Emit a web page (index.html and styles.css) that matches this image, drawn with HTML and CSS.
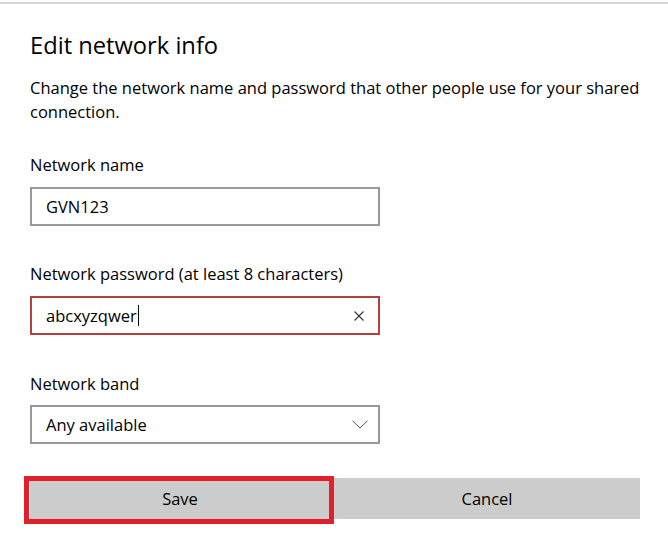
FILE: index.html
```html
<!DOCTYPE html>
<html lang="en">
<head>
<meta charset="utf-8">
<title>Edit network info</title>
<link rel="stylesheet" href="styles.css">
</head>
<body>
<div class="topline"></div>
<main class="dialog">
  <h1 class="title">Edit network info</h1>
  <p class="desc">Change the network name and password that other people use for your shared connection.</p>

  <div class="field field-first">
    <div class="label">Network name</div>
    <div class="box">
      <span class="value">GVN123</span>
    </div>
  </div>

  <div class="field field-second">
    <div class="label">Network password (at least 8 characters)</div>
    <div class="box box-focus">
      <span class="value">abcxyzqwer<span class="caret"></span></span>
      <svg class="icon-x" width="10" height="10" viewBox="0 0 10 10" aria-hidden="true">
        <path d="M0.5 0.5 L9.5 9.5 M9.5 0.5 L0.5 9.5" stroke="#333" stroke-width="1.1" fill="none"/>
      </svg>
    </div>
  </div>

  <div class="field field-third">
    <div class="label">Network band</div>
    <div class="box box-select">
      <span class="value">Any available</span>
      <svg class="icon-chev" width="16" height="9" viewBox="0 0 16 9" aria-hidden="true">
        <path d="M0.5 0.8 L8 8 L15.5 0.8" stroke="#555" stroke-width="1" fill="none"/>
      </svg>
    </div>
  </div>

  <div class="buttons">
    <div class="btn-wrap highlighted">
      <button class="btn btn-save">Save</button>
    </div>
    <button class="btn btn-cancel">Cancel</button>
  </div>
</main>
</body>
</html>
```

FILE: styles.css
```css
html, body {
  margin: 0;
  padding: 0;
  background: #ffffff;
}

body {
  width: 668px;
  height: 545px;
  overflow: hidden;
  font-family: "Open Sans", "Noto Sans", "Liberation Sans", sans-serif;
  color: #000000;
}

.topline {
  margin-top: 2px;
  height: 2px;
  background: #d6d6d6;
}

.dialog {
  padding: 0 28px 0 30px;
}

.title {
  margin: 26px 0 0 0;
  font-size: 23.7px;
  line-height: 30px;
  font-weight: 400;
}

.desc {
  margin: 16px 0 0 0;
  font-size: 16.5px;
  line-height: 24px;
}

.field-first {
  margin-top: 29px;
}

.field-second {
  margin-top: 36px;
}

.field-third {
  margin-top: 37px;
}

.label {
  font-size: 16.5px;
  line-height: 24px;
}

.box {
  margin-top: 10px;
  width: 350px;
  height: 39px;
  box-sizing: border-box;
  border: 2px solid #999999;
  display: flex;
  align-items: center;
  padding: 0 10px 0 14px;
  font-size: 16.5px;
}

.box-select {
  margin-top: 9px;
}

.box-focus {
  border-color: #b4413c;
}

.value {
  flex: 1;
  display: flex;
  align-items: center;
}

.caret {
  display: inline-block;
  width: 1px;
  height: 21px;
  background: #000000;
  margin-left: 1px;
}

.icon-x {
  margin-right: 4px;
}

.buttons {
  margin-top: 34px;
  display: flex;
  gap: 4px;
}

.btn-wrap {
  position: relative;
}

.btn {
  height: 41px;
  border: none;
  background: #cccccc;
  font-family: inherit;
  font-size: 16.5px;
  color: #000000;
  padding: 0;
  margin: 0;
  display: block;
}

.btn-save {
  width: 300px;
}

.btn-cancel {
  width: 306px;
}

.highlighted::after {
  content: "";
  position: absolute;
  left: -6px;
  top: -2px;
  right: -4px;
  bottom: -5px;
  border: 5px solid #e0202a;
  pointer-events: none;
}
```
